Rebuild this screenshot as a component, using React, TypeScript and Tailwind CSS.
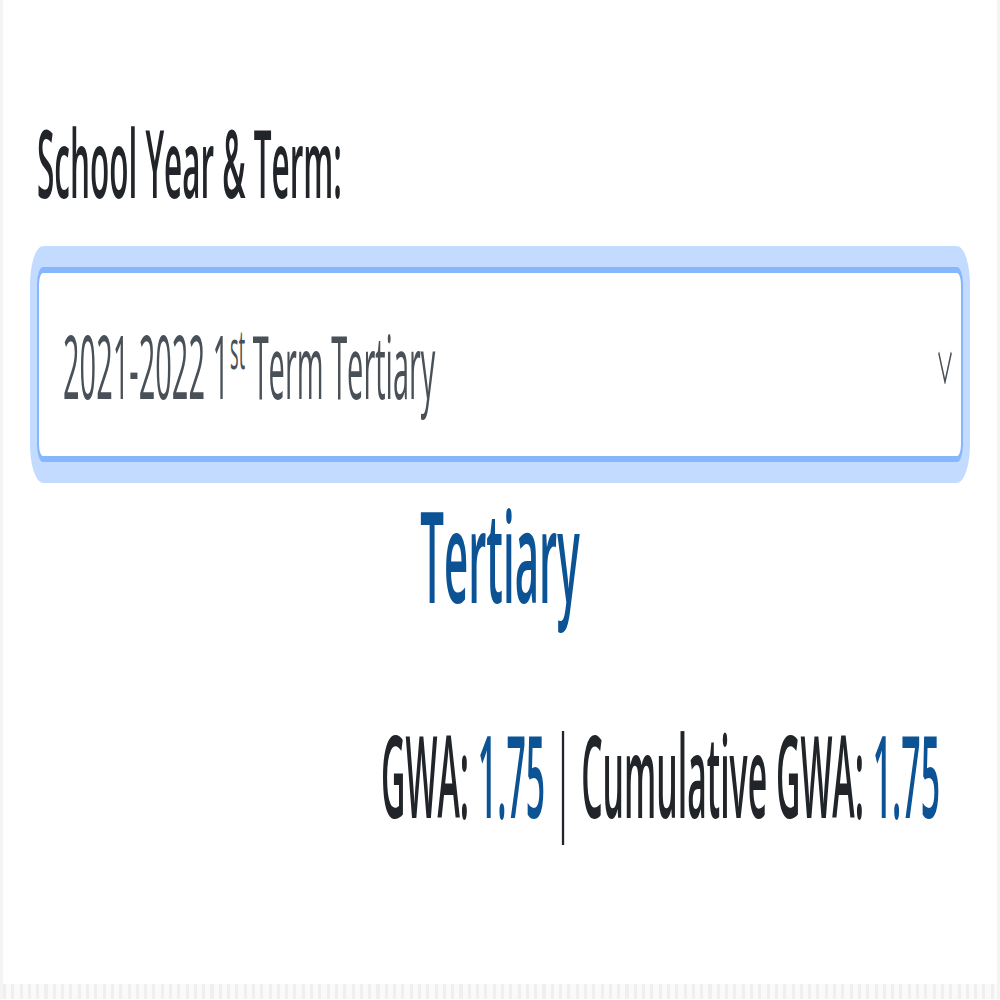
import React from 'react';

const App: React.FC = () => {
  return (
    <div className="w-[1000px] h-[1000px] overflow-hidden bg-white font-['Open_Sans',sans-serif]">
      {/* the reference is stretched 3x vertically, so lay out at 1/3 height and scale */}
      <div className="w-[1000px] h-[333.34px] origin-top-left [transform:scaleY(3)] flex flex-col border-x-[3px] border-[#f4f4f4]">
        <div className="flex-1 px-[34px]">
          <label className="block pt-[35px] text-[31.5px] leading-[38px] font-semibold text-[#212529]">
            School Year &amp; Term:
          </label>

          <div className="mt-[16px] rounded-[6px] border-2 border-[#86b7fe] ring-[7px] ring-[#c2dbfe] bg-white h-[65px] flex items-center justify-between pl-[24px] pr-[9px]">
            <span className="text-[29px] leading-[61px] text-[#495057]">
              2021-2022 1<sup className="text-[18px] relative -top-[10px] ml-[1px]">st</sup> Term Tertiary
            </span>
            <svg width="14" height="11" viewBox="0 0 14 11" className="mt-[1px]">
              <polyline points="0.7,0.5 7,10.3 13.3,0.5" fill="none" stroke="#495057" strokeWidth="1.3" />
            </svg>
          </div>

          <h2 className="mt-[6px] text-center text-[42px] leading-[50px] font-semibold text-[#0b5394]">Tertiary</h2>

          {/* this line is a touch taller than the rest in the reference */}
          <p className="mt-[25px] flex justify-end pr-[23px] text-[33.8px] leading-[46px] font-semibold [transform:scaleY(1.12)] text-[#212529] whitespace-pre">
            <span>GWA: </span>
            <span className="text-[#0b5394]">1.75</span>
            <span className="font-normal"> | </span>
            <span>Cumulative GWA: </span>
            <span className="text-[#0b5394]">1.75</span>
          </p>
        </div>
        <div className="h-[5px] bg-[repeating-linear-gradient(90deg,#efefef_0_3px,#fafafa_3px_8.3px)]" />
      </div>
    </div>
  );
};

export default App;
